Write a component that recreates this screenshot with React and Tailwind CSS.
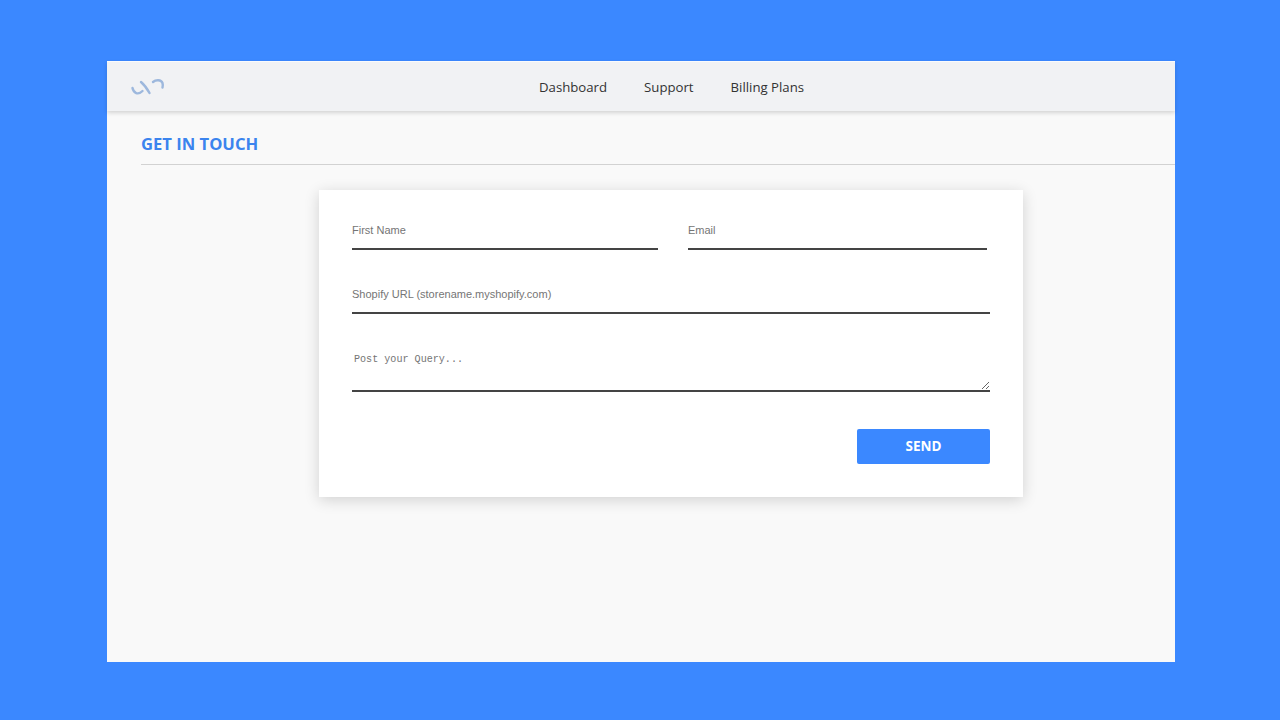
import React from 'react';

function Logo() {
  return (
    <svg width="34" height="20" viewBox="0 0 34 20" fill="none" stroke="#9db8dd" strokeWidth="2.4" strokeLinecap="round">
      <path d="M1.500 11C2.500 16 7 18.500 11.500 14" />
      <path d="M10 5c3 2.500 6 6.500 8.500 11" />
      <path d="M22 5c3-2.500 8-2.500 9.500 1 .5 1.500.3 3 0 4.500" />
    </svg>
  );
}

export default function App() {
  return (
    <div className="h-[720px] w-[1280px] overflow-hidden bg-[#3b88ff] pt-[61px] pl-[107px] font-['Open_Sans',sans-serif]">
      <div className="h-[601px] w-[1068px] bg-[#f9f9f9]">
        {/* Nav */}
        <header className="relative flex h-[50px] items-center border-t border-[#fafbfc] bg-[#f1f2f4] pt-[3px] shadow-[0_2px_4px_rgba(0,0,0,0.15)]">
          <div className="absolute left-[24px] top-[15px]">
            <Logo />
          </div>
          <nav className="ml-[432px] flex gap-[37px] text-[13.2px] text-[#333]">
            <a>Dashboard</a>
            <a>Support</a>
            <a>Billing Plans</a>
          </nav>
        </header>

        {/* Title */}
        <div className="ml-[34px] border-b border-[#d2d2d2] pt-[21px] pb-[8px]">
          <h1 className="text-[16.6px] leading-[24px] font-bold text-[#3b84ee]">GET IN TOUCH</h1>
        </div>

        {/* Form card */}
        <div className="mt-[25px] ml-[212px] h-[307px] w-[704px] bg-white px-[33px] pt-[28px] shadow-[0_3px_14px_rgba(0,0,0,0.16)]">
          <div className="flex">
            <input
              placeholder="First Name"
              className="h-[32px] w-[306px] border-b-2 border-[#444] pb-[6px] font-['Liberation_Sans',sans-serif] text-[11px] outline-none placeholder:text-[#757575]"
            />
            <input
              placeholder="Email"
              className="ml-[30px] h-[32px] w-[299px] border-b-2 border-[#444] pb-[6px] font-['Liberation_Sans',sans-serif] text-[11px] outline-none placeholder:text-[#757575]"
            />
          </div>
          <input
            placeholder="Shopify URL (storename.myshopify.com)"
            className="mt-[32px] block h-[32px] w-[638px] border-b-2 border-[#444] pb-[6px] font-['Liberation_Sans',sans-serif] text-[11px] outline-none placeholder:text-[#757575]"
          />
          <textarea
            placeholder="Post your Query..."
            className="mt-[32px] block h-[46px] w-[638px] border-b-2 border-[#444] px-[2px] pt-[7px] font-['Liberation_Mono',monospace] text-[10.1px] leading-[14px] outline-none placeholder:text-[#757575]"
          />
          <div className="mt-[37px] flex justify-end">
            <button className="h-[35px] w-[133px] rounded-[2px] bg-[#3b88ff] text-[13.5px] font-bold text-white">
              SEND
            </button>
          </div>
        </div>
      </div>
    </div>
  );
}
